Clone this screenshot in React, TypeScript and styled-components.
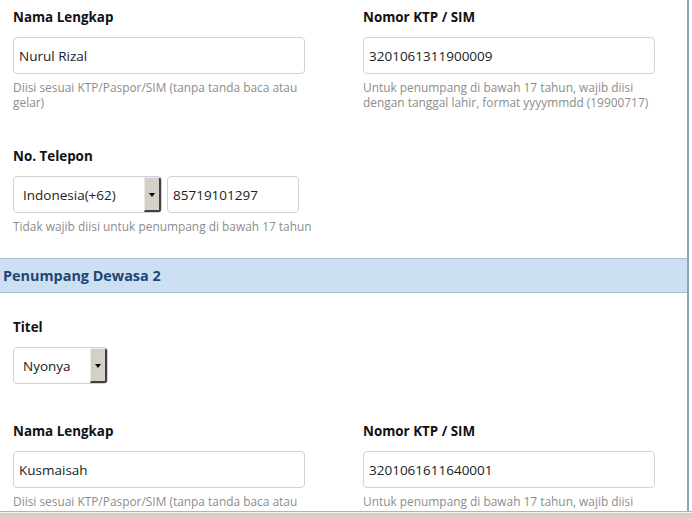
import React from "react";
import styled, { createGlobalStyle } from "styled-components";

const Global = createGlobalStyle`
  html, body { margin: 0; padding: 0; background: #fff; }
  body { font-family: "Open Sans", "DejaVu Sans", sans-serif; overflow: hidden; }
`;

const Page = styled.div`
  box-sizing: border-box;
  width: 689px;
  min-height: 517px;
  border-right: 2px solid #8da3be;
  padding-top: 7px;
`;

const Block = styled.div`
  padding-left: 13px;
`;

const Row = styled.div<{ $gap: number }>`
  display: grid;
  grid-template-columns: 350px 1fr;
  margin-bottom: ${(p) => p.$gap}px;
`;

const Field = styled.div`
  display: flex;
  flex-direction: column;
`;

const Label = styled.label`
  font-size: 13.4px;
  font-weight: 700;
  line-height: 20px;
  color: #111;
  margin-bottom: 10px;
`;

const TextInput = styled.div<{ $w: number }>`
  box-sizing: border-box;
  width: ${(p) => p.$w}px;
  height: 37px;
  border: 1px solid #ccd3dd;
  border-radius: 4px;
  background: #fff;
  display: flex;
  align-items: center;
  padding-left: 5px;
  font-size: 13.5px;
  color: #222;
`;

const Help = styled.div`
  width: 300px;
  margin-top: 6px;
  font-size: 11.9px;
  line-height: 15px;
  color: #8d8d8d;
`;

const Inline = styled.div`
  display: flex;
  gap: 5px;
`;

const Select = styled.div<{ $w: number }>`
  box-sizing: border-box;
  width: ${(p) => p.$w}px;
  height: 37px;
  border: 1px solid #ccd3dd;
  border-radius: 4px;
  background: #fff;
  display: flex;
  align-items: stretch;
  font-size: 13.5px;
  color: #222;
  overflow: hidden;
`;

const SelectText = styled.span`
  flex: 1;
  display: flex;
  align-items: center;
  padding-left: 9px;
`;

const SelectButton = styled.span`
  box-sizing: border-box;
  width: 17px;
  background: #d4d0c8;
  border-left: 1px solid #eeebe4;
  border-top: 1px solid #eeebe4;
  border-right: 2px solid #404040;
  border-bottom: 2px solid #404040;
  display: flex;
  align-items: center;
  justify-content: center;
`;

const Arrow = styled.span`
  width: 0;
  height: 0;
  border-left: 3.5px solid transparent;
  border-right: 3.5px solid transparent;
  border-top: 4px solid #000;
  margin-top: 1px;
`;

const SectionHeader = styled.div`
  height: 33px;
  background: #cddff2;
  border-top: 1px solid #a9bfd8;
  border-bottom: 1px solid #a9bfd8;
  display: flex;
  align-items: center;
  padding-left: 3px;
  font-size: 14.4px;
  font-weight: 700;
  color: #1f4573;
  margin-bottom: 24px;
`;

const ScrollBar = styled.div`
  position: fixed;
  left: 0;
  right: 0;
  bottom: 0;
  height: 4px;
  background: #d4d0c8;
  border-top: 1px solid #f4f2ee;
  box-shadow: 0 -1px 0 #b8b4ac;
`;

const Dropdown = ({ value, w }: { value: string; w: number }) => (
  <Select $w={w}>
    <SelectText>{value}</SelectText>
    <SelectButton>
      <Arrow />
    </SelectButton>
  </Select>
);

export default function App() {
  return (
    <>
      <Global />
      <Page>
        <Block>
          <Row $gap={36}>
            <Field>
              <Label>Nama Lengkap</Label>
              <TextInput $w={292}>Nurul Rizal</TextInput>
              <Help>Diisi sesuai KTP/Paspor/SIM (tanpa tanda baca atau gelar)</Help>
            </Field>
            <Field>
              <Label>Nomor KTP / SIM</Label>
              <TextInput $w={292}>3201061311900009</TextInput>
              <Help>Untuk penumpang di bawah 17 tahun, wajib diisi dengan tanggal lahir, format yyyymmdd (19900717)</Help>
            </Field>
          </Row>
          <Row $gap={24}>
            <Field>
              <Label>No. Telepon</Label>
              <Inline>
                <Dropdown value="Indonesia(+62)" w={149} />
                <TextInput $w={132}>85719101297</TextInput>
              </Inline>
              <Help>Tidak wajib diisi untuk penumpang di bawah 17 tahun</Help>
            </Field>
          </Row>
        </Block>
        <SectionHeader>Penumpang Dewasa 2</SectionHeader>
        <Block>
          <Row $gap={37}>
            <Field>
              <Label>Titel</Label>
              <Dropdown value="Nyonya" w={95} />
            </Field>
          </Row>
          <Row $gap={0}>
            <Field>
              <Label>Nama Lengkap</Label>
              <TextInput $w={292}>Kusmaisah</TextInput>
              <Help>Diisi sesuai KTP/Paspor/SIM (tanpa tanda baca atau gelar)</Help>
            </Field>
            <Field>
              <Label>Nomor KTP / SIM</Label>
              <TextInput $w={292}>3201061611640001</TextInput>
              <Help>Untuk penumpang di bawah 17 tahun, wajib diisi dengan tanggal lahir, format yyyymmdd (19900717)</Help>
            </Field>
          </Row>
        </Block>
      </Page>
      <ScrollBar />
    </>
  );
}
